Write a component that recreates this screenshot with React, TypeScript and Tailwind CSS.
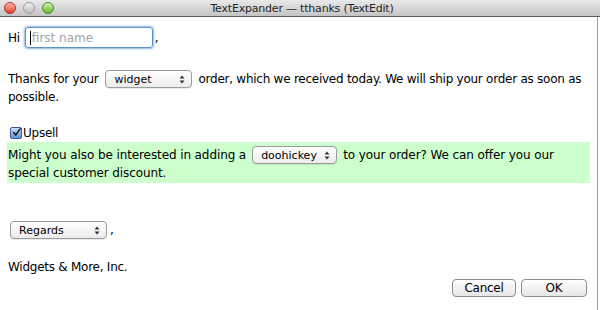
import React from 'react'

const font = { fontFamily: '"DejaVu Sans", "Noto Sans", sans-serif' }

function Arrows() {
  return (
    <svg width="6" height="9" viewBox="0 0 6 9" className="shrink-0">
      <path d="M3 0.5 L5.5 3.5 H0.5 Z" fill="#333" />
      <path d="M3 8.5 L5.5 5.5 H0.5 Z" fill="#333" />
    </svg>
  )
}

function PopUp({ label, width, space }: { label: string; width: string; space: string }) {
  return (
    <span
      className={`inline-flex items-center justify-between h-[18px] ${width} ${space} pl-[8px] pr-[6px] rounded-[4px] border border-[#9b9b9b] bg-gradient-to-b from-white to-[#ececec] shadow-[0_1px_0_rgba(0,0,0,0.08)] text-[11px] leading-none tracking-normal text-black align-middle`}
    >
      <span>{label}</span>
      <Arrows />
    </span>
  )
}

function PushButton({ label, width }: { label: string; width: string }) {
  return (
    <button
      className={`h-[18px] ${width} rounded-[4px] border border-[#8e8e8e] bg-gradient-to-b from-white to-[#e6e6e6] text-[12px] leading-none text-black`}
    >
      {label}
    </button>
  )
}

function TrafficLight({ from, to, ring }: { from: string; to: string; ring: string }) {
  return (
    <span
      className={`w-[12px] h-[12px] rounded-full border ${ring} bg-gradient-to-b ${from} ${to}`}
    />
  )
}

export default function App() {
  return (
    <div className="w-[600px] h-[310px] bg-white flex flex-col overflow-hidden text-black" style={font}>
      {/* title bar */}
      <div className="h-[17px] shrink-0 flex items-center bg-gradient-to-b from-[#e9e9e9] to-[#c4c4c4] border-b border-[#5e5e5e]">
        <div className="flex items-center gap-[7px] pl-[4px]">
          <TrafficLight from="from-[#ffb0a8]" to="to-[#e0362a]" ring="border-[#a8372e]" />
          <TrafficLight from="from-[#f2f2f2]" to="to-[#bdbdbd]" ring="border-[#9a9a9a]" />
          <TrafficLight from="from-[#d4f5a8]" to="to-[#5fb42c]" ring="border-[#4f8a2c]" />
        </div>
        <div className="flex-1 text-center text-[11px] tracking-[-0.2px] leading-none text-[#262626] pr-[50px]">
          TextExpander — tthanks (TextEdit)
        </div>
      </div>

      <div className="flex flex-1 min-h-0">
        <div className="w-[597px] flex flex-col pl-[8px] pr-[7px] text-[12px] leading-[18px] tracking-[-0.25px]">
          {/* Hi first name */}
          <div className="flex items-center mt-[10px] h-[21px]">
            <span>Hi</span>
            <span className="ml-[5px] w-[128px] h-[21px] rounded-[3px] border border-[#5f93cf] shadow-[0_0_2px_1px_#8fb7e4] flex items-center pl-[4px] tracking-normal">
              <span className="w-px h-[14px] bg-black mr-[1px]" />
              <span className="text-[#a3a3a3]">first name</span>
            </span>
            <span className="ml-[2px]">,</span>
          </div>

          {/* thanks paragraph */}
          <div className="mt-[22px]">
            <div className="flex items-center h-[18px] whitespace-nowrap">
              <span>Thanks for your</span>
              <PopUp label="widget" width="w-[87px]" space="ml-[7px] mr-[6px]" />
              <span>order, which we received today. We will ship your order as soon as</span>
            </div>
            <div>possible.</div>
          </div>

          {/* upsell */}
          <div className="flex items-center mt-[20px] h-[14px] pl-[2px]">
            <span className="w-[12px] h-[12px] rounded-[2px] border border-[#3a5f8f] bg-gradient-to-b from-[#c8defa] to-[#5b94dc] flex items-center justify-center">
              <svg width="11" height="11" viewBox="0 0 11 11" className="-mt-[2px] ml-[1px]">
                <path d="M2 5.5 L4.5 8.5 L10 1" fill="none" stroke="#111" strokeWidth="1.8" strokeLinecap="round" strokeLinejoin="round" />
              </svg>
            </span>
            <span className="ml-[1px]">Upsell</span>
          </div>
          <div className="mt-[2px] -ml-[1px] w-[583px] bg-[#ccffcc] pl-[1px] pt-[4px] pb-[1px] leading-[18px] tracking-[-0.1px]">
            <div className="flex items-center h-[18px] whitespace-nowrap">
              <span>Might you also be interested in adding a</span>
              <PopUp label="doohickey" width="w-[85px]" space="ml-[6px] mr-[6px]" />
              <span>to your order? We can offer you our</span>
            </div>
            <div>special customer discount.</div>
          </div>

          {/* regards */}
          <div className="flex items-center mt-[38px] h-[18px]">
            <PopUp label="Regards" width="w-[97px]" space="ml-[2px]" />
            <span className="ml-[3px]">,</span>
          </div>

          {/* signature */}
          <div className="mt-[19px]">Widgets &amp; More, Inc.</div>

          {/* buttons */}
          <div className="flex justify-end gap-[5px] mt-[3px] pr-[3px]">
            <PushButton label="Cancel" width="w-[64px]" />
            <PushButton label="OK" width="w-[66px]" />
          </div>
        </div>
        <div className="w-px bg-[#9d9d9d]" />
        <div className="w-[2px]" />
      </div>
    </div>
  )
}
